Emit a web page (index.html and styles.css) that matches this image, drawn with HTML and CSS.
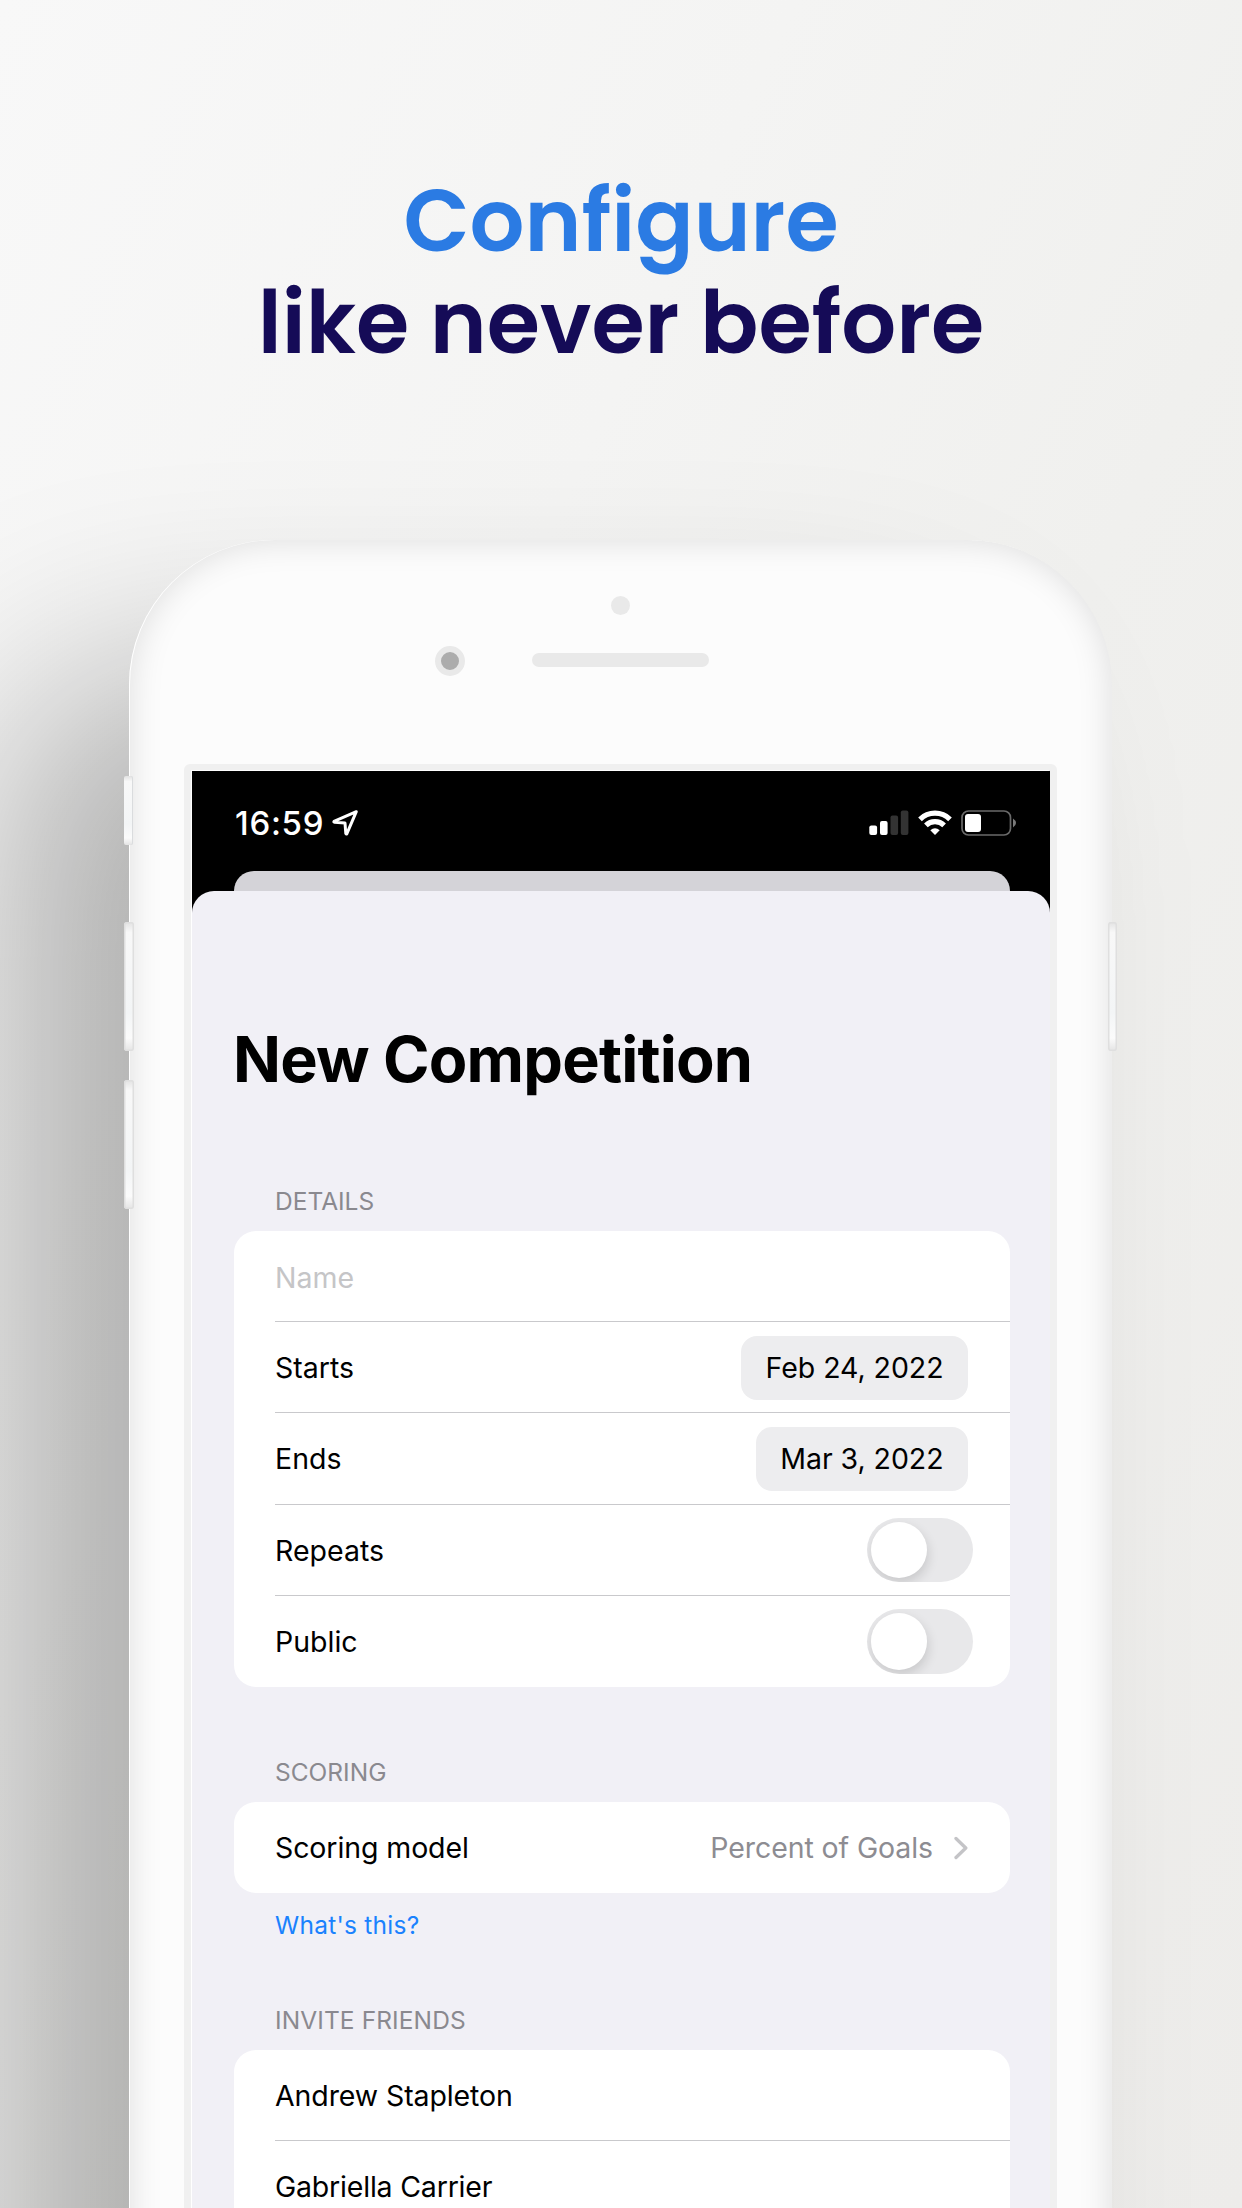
FILE: index.html
```html
<!DOCTYPE html>
<html lang="en">
<head>
<meta charset="utf-8">
<title>New Competition</title>
<link rel="stylesheet" href="styles.css">
</head>
<body>
<main class="poster">
  <h1 class="headline">
    <span class="headline-accent">Configure</span>
    <span class="headline-main">like never before</span>
  </h1>

  <div class="phone">
    <i class="side-button mute"></i>
    <i class="side-button volume-up"></i>
    <i class="side-button volume-down"></i>
    <i class="side-button power"></i>
    <i class="sensor"></i>
    <i class="camera"></i>
    <i class="speaker"></i>

    <div class="bezel">
      <div class="screen">
        <header class="status-bar">
          <div class="status-left">
            <span class="time">16:59</span>
            <svg class="location" width="28" height="28" viewBox="0 0 28 28" fill="none" stroke="#fff" stroke-width="3" stroke-linejoin="round"><path d="M25.300 2.700 L3 12.400 Q2.500 13 3.500 13.200 L14 14 L14.800 24.500 Q15.200 25.500 15.900 24.700 Z"/></svg>
          </div>
          <div class="status-right">
            <svg class="signal" width="40" height="26" viewBox="0 0 40 26"><rect x="0.300" y="15.500" width="7.800" height="9.500" rx="2" fill="#fff"/><rect x="11" y="11" width="7.600" height="14" rx="2" fill="#fff"/><rect x="21.500" y="5.500" width="7.600" height="19.500" rx="2" fill="#333"/><rect x="31.800" y="0.500" width="7.600" height="24.500" rx="2" fill="#333"/></svg>
            <svg class="wifi" width="34" height="26" viewBox="0 0 34 26" fill="none" stroke="#fff" stroke-width="5.200"><path d="M2 9.300 A21.500 21.500 0 0 1 32 9.300"/><path d="M7.900 15.400 A13 13 0 0 1 26.100 15.400"/><path d="M17 25 L12.300 20.300 Q17 16.200 21.700 20.300 Z" fill="#fff" stroke="none"/></svg>
            <svg class="battery" width="56" height="26" viewBox="0 0 56 26"><rect x="1" y="1" width="48.500" height="24" rx="6.500" fill="none" stroke="#6a6a6a" stroke-width="1.700"/><rect x="4" y="4" width="16" height="18" rx="3" fill="#fff"/><path d="M52 8.500 Q55 10.500 55 13 Q55 15.500 52 17.500 Z" fill="#7a7a7a"/></svg>
          </div>
          <div class="back-card"></div>
        </header>

        <section class="sheet">
          <h2 class="title">New Competition</h2>

          <h3 class="section-label">DETAILS</h3>
          <div class="card">
            <div class="row placeholder"><span>Name</span></div>
            <div class="row"><span>Starts</span><span class="pill">Feb 24, 2022</span></div>
            <div class="row"><span>Ends</span><span class="pill">Mar 3, 2022</span></div>
            <div class="row"><span>Repeats</span><span class="toggle"><i></i></span></div>
            <div class="row"><span>Public</span><span class="toggle"><i></i></span></div>
          </div>

          <h3 class="section-label scoring">SCORING</h3>
          <div class="card">
            <div class="row">
              <span class="tight">Scoring model</span>
              <span class="value">Percent of Goals
                <svg width="14" height="24" viewBox="0 0 14 24" fill="none" stroke="#c4c4c7" stroke-width="3.300" stroke-linecap="round" stroke-linejoin="round"><path d="M2 2.500 L11.800 12 L2 21.500"/></svg>
              </span>
            </div>
          </div>
          <a class="link">What's this?</a>

          <h3 class="section-label friends">INVITE FRIENDS</h3>
          <div class="card">
            <div class="row"><span class="tight">Andrew Stapleton</span></div>
            <div class="row"><span class="tighter">Gabriella Carrier</span></div>
            <div class="row"></div>
          </div>
        </section>
      </div>
    </div>
  </div>
</main>
</body>
</html>
```
FILE: styles.css
```css
* {
  box-sizing: border-box;
}

body {
  margin: 0;
  font-family: "Inter", "Liberation Sans", sans-serif;
  color: #000;
}

.poster {
  height: 2208px;
  overflow: hidden;
  display: flex;
  flex-direction: column;
  background: linear-gradient(115deg, #f8f8f8 0%, #f4f4f3 35%, #f0f0ee 60%, #edecea 100%);
}

.headline {
  margin: 0;
  padding-top: 169.500px;
  height: 540px;
  font-family: "Poppins", "Inter", sans-serif;
  font-size: 86.200px;
  line-height: 102px;
  font-weight: 600;
  text-align: center;
  flex: none;
}

.headline span {
  display: block;
}

.headline-accent {
  color: #2b7be3;
}

.headline-main {
  color: #150b57;
}

/* Phone body */
.phone {
  position: relative;
  flex: none;
  width: 983px;
  height: 1820px;
  margin-left: 129px;
  padding: 224px 55px 0;
  border-radius: 145px 145px 0 0;
  background: #fcfcfc;
  box-shadow:
    inset 1px 0 0 #fff,
    inset 0 0 34px rgba(0, 0, 0, 0.13),
    -130px 130px 200px rgba(0, 0, 0, 0.27);
}

.side-button {
  position: absolute;
  left: -5px;
  width: 10px;
  height: 129px;
  border-radius: 3px;
  background: linear-gradient(#e2e2e2, #f8f8f8 8%, #f3f5f6 70%, #fbfbfb 90%, #e4e4e4);
  box-shadow: inset 0 0 0 1.500px #dfdfdf;
}

.mute {
  top: 236px;
  width: 9px;
  height: 69px;
  border-radius: 2px;
  box-shadow: inset -1px 0 0 #dadcde;
}

.volume-up {
  top: 382px;
}

.volume-down {
  top: 540px;
}

.power {
  top: 382px;
  left: auto;
  right: -5px;
  width: 9px;
}

.sensor,
.camera,
.speaker {
  position: absolute;
  background: #e9e9e9;
}

.sensor {
  left: 482px;
  top: 56px;
  width: 19px;
  height: 19px;
  border-radius: 50%;
}

.camera {
  left: 306px;
  top: 106px;
  width: 30px;
  height: 30px;
  border: 6px solid #e9e9e9;
  border-radius: 50%;
  background: #acacac;
}

.speaker {
  left: 403px;
  top: 113px;
  width: 177px;
  height: 13.500px;
  border-radius: 7px;
}

.bezel {
  height: 1600px;
  padding: 7px 7px 0 8px;
  border-radius: 6px 6px 0 0;
  background: #f0f0f0;
}

.screen {
  height: 100%;
  background: #000;
  box-shadow: -1px -1px 0 #fff;
}

/* Status bar */
.status-bar {
  height: 120px;
  padding: 38px 33px 0 43px;
  display: grid;
  grid-template-columns: 1fr auto;
  grid-template-rows: 28px 1fr;
  align-items: center;
  color: #fff;
}

.status-left,
.status-right {
  display: flex;
  align-items: center;
}

.status-left {
  gap: 7px;
}

.time {
  font-size: 33px;
  line-height: 28px;
  font-weight: 500;
  letter-spacing: 0.7px;
}

.wifi {
  margin: 0 9px;
}

.back-card {
  grid-column: 1 / -1;
  align-self: end;
  height: 20.500px;
  margin: 0 7px 0 -1px;
  border-radius: 20px 20px 0 0;
  background: #d4d3d8;
}

/* Modal sheet */
.sheet {
  height: 1473px;
  padding: 130px 40px 0 42px;
  border-radius: 22px 22px 0 0;
  background: #f1f0f6;
}

.title {
  margin: 0 0 89px -1px;
  font-size: 63px;
  line-height: 76px;
  font-weight: 700;
  letter-spacing: -0.8px;
}

.section-label {
  margin: 0 0 14.600px;
  padding-left: 41px;
  font-size: 24.5px;
  line-height: 30px;
  font-weight: 400;
  color: #8a898f;
}

.scoring {
  margin-top: 69.900px;
}

.friends {
  margin-top: 65.300px;
  letter-spacing: 0.1px;
}

.card {
  padding: 0.500px 0 0 41px;
  border-radius: 22px;
  background: #fff;
}

.row {
  display: flex;
  align-items: center;
  justify-content: space-between;
  height: 91.200px;
  padding: 1.500px 42px 0 0;
  border-bottom: 1px solid #c9c9cc;
  font-size: 28.5px;
  line-height: 36px;
}

.row:last-child {
  border-bottom: 0;
}

.placeholder {
  padding-top: 3px;
  color: #c5c5c7;
}

.tight {
  letter-spacing: -0.100px;
}

.tighter {
  letter-spacing: -0.200px;
}

.pill {
  padding: 14px 24.500px;
  border-radius: 16px;
  background: #ededef;
  letter-spacing: -0.050px;
}

.toggle {
  width: 106px;
  height: 64.500px;
  margin: -1px -4.500px 0 0;
  padding: 4px;
  border-radius: 33px;
  background: #e8e8ea;
  overflow: hidden;
}

.toggle i {
  display: block;
  width: 56.500px;
  height: 56.500px;
  border-radius: 50%;
  background: #fff;
  box-shadow: 1px 5px 12px rgba(0, 0, 0, 0.14);
}

.value {
  display: flex;
  align-items: center;
  gap: 21px;
  color: #8d8c92;
  letter-spacing: -0.100px;
}

.link {
  display: block;
  margin: 16.500px 0 0;
  padding-left: 41px;
  font-size: 24.5px;
  line-height: 30px;
  letter-spacing: 0.25px;
  color: #1a82fe;
}
```
